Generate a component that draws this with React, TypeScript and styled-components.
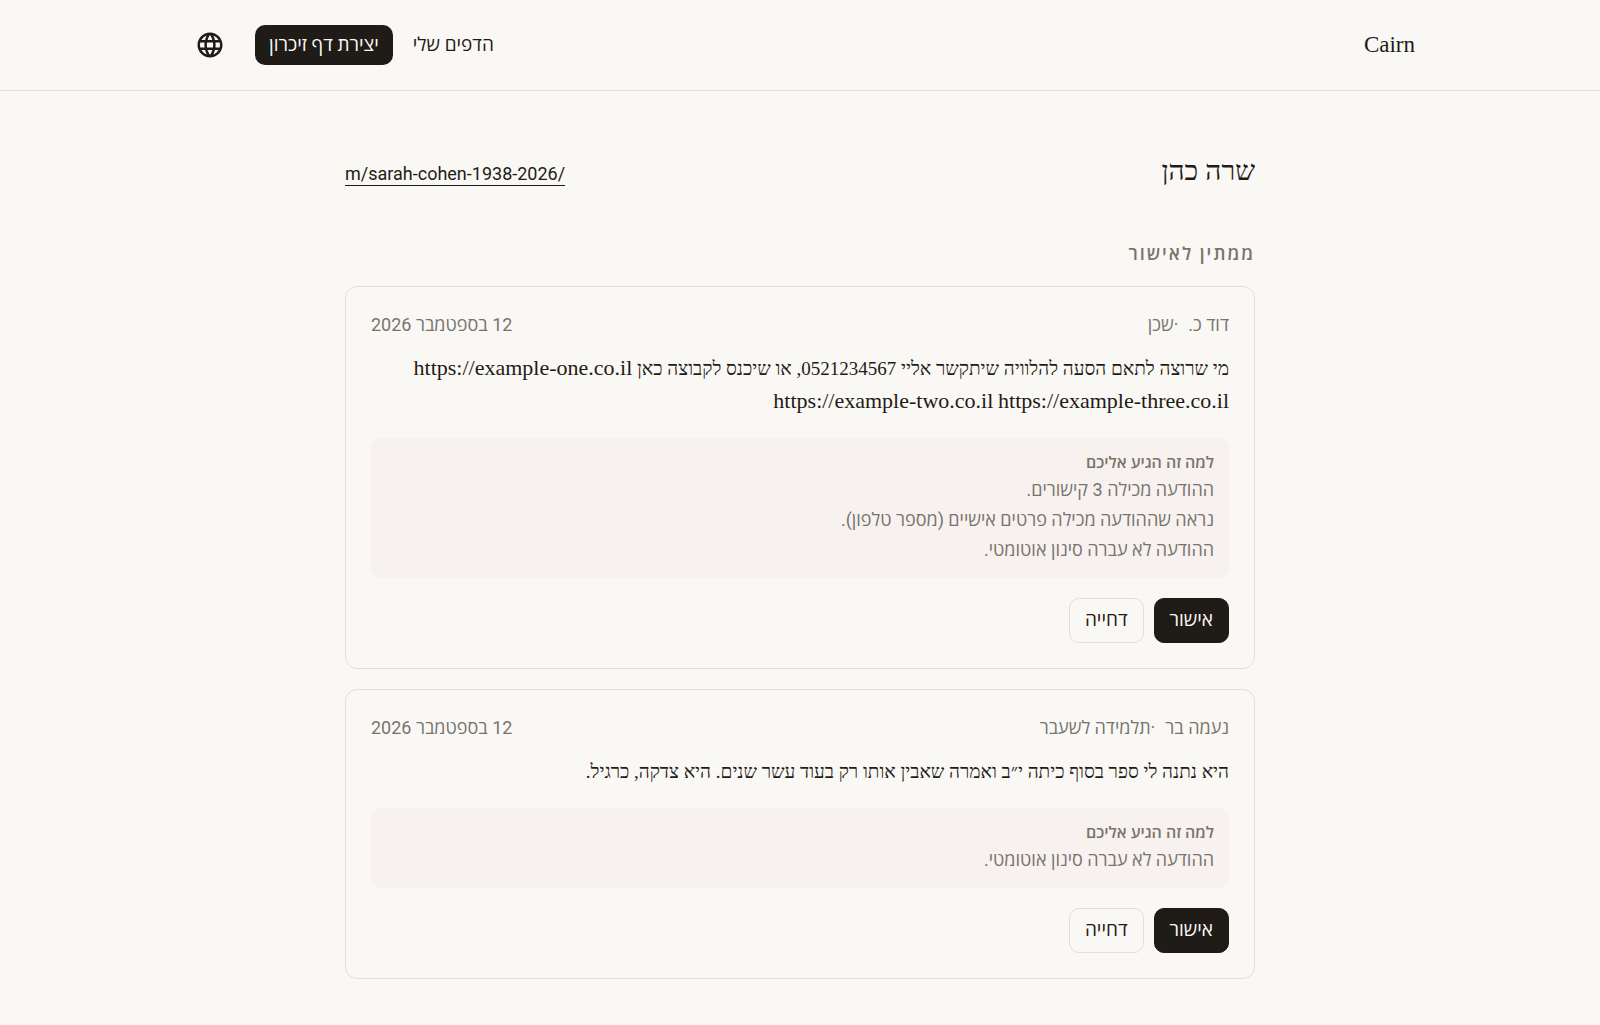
import React from "react";
import styled, { createGlobalStyle } from "styled-components";
import { MdLanguage } from "react-icons/md";

const color = {
  page: "#faf8f4",
  ink: "#1f1b17",
  muted: "#78746d",
  line: "#e1dfd9",
  note: "#f7f2ef",
};

const sans = `Roboto, "Open Sans", "Liberation Sans", sans-serif`;
const serif = `"Liberation Serif", serif`;

const GlobalStyle = createGlobalStyle`
  *, *::before, *::after { box-sizing: border-box; }
  body {
    margin: 0;
    background: ${color.page};
    color: ${color.ink};
    font-family: ${sans};
    font-size: 18px;
  }
  h1, h2, h3, p, ul { margin: 0; padding: 0; }
`;

const Header = styled.header`
  border-bottom: 1px solid ${color.line};
`;

const HeaderInner = styled.div`
  display: flex;
  align-items: center;
  justify-content: space-between;
  max-width: 1230px;
  min-height: 90px;
  margin: 0 auto;
`;

const Brand = styled.a`
  font-family: ${serif};
  font-size: 23px;
  line-height: 30px;
  color: inherit;
  text-decoration: none;
`;

const Nav = styled.nav`
  display: flex;
  align-items: center;
  gap: 20px;
`;

const NavLink = styled.a<{ $filled?: boolean }>`
  display: flex;
  align-items: center;
  height: 40px;
  padding: 0 ${(p) => (p.$filled ? "14px" : "0")} 3px;
  border-radius: 10px;
  background: ${(p) => (p.$filled ? color.ink : "transparent")};
  color: ${(p) => (p.$filled ? color.page : color.ink)};
  font-size: 19px;
  text-decoration: none;
`;

const IconButton = styled.button`
  display: grid;
  place-items: center;
  width: 50px;
  height: 50px;
  padding: 0;
  border: 0;
  background: none;
  color: inherit;
  cursor: pointer;
`;

const Main = styled.main`
  max-width: 910px;
  margin: 0 auto;
  padding: 60px 0 45px;
`;

const TitleRow = styled.div`
  display: flex;
  align-items: baseline;
  justify-content: space-between;
`;

const Title = styled.h1`
  font-family: ${serif};
  font-size: 28px;
  font-weight: 400;
  line-height: 40px;
`;

const PageLink = styled.a`
  border-bottom: 1px solid ${color.ink};
  color: inherit;
  line-height: 22px;
  text-decoration: none;
`;

const SectionTitle = styled.h2`
  margin: 49px 0 18px;
  color: ${color.muted};
  font-size: 18px;
  font-weight: 600;
  line-height: 28px;
  letter-spacing: 2px;
`;

const CardList = styled.div`
  display: grid;
  gap: 20px;
`;

const Card = styled.article`
  padding: 25px;
  border: 1px solid ${color.line};
  border-radius: 12px;
`;

const Meta = styled.div`
  display: flex;
  justify-content: space-between;
  margin-bottom: 15px;
  color: ${color.muted};
  line-height: 25px;
`;

const Author = styled.div`
  display: flex;
  gap: 10px;
`;

const Message = styled.p`
  font-family: ${serif};
  font-size: 19px;
  line-height: 33px;
`;

const Url = styled.span`
  font-size: 22px;
  line-height: 20px;
`;

const Note = styled.section`
  margin: 20px 0;
  padding: 15px 15px 13px;
  border-radius: 10px;
  background: ${color.note};
  color: ${color.muted};
`;

const NoteTitle = styled.h3`
  margin-bottom: 2px;
  font-size: 16px;
  font-weight: 600;
  line-height: 20px;
`;

const Reasons = styled.ul`
  list-style: none;
  line-height: 30px;
`;

const Actions = styled.div`
  display: flex;
  gap: 10px;
`;

const ActionButton = styled.button<{ $primary?: boolean }>`
  height: 45px;
  padding: 0 15px 3px;
  border: 1px solid ${(p) => (p.$primary ? color.ink : color.line)};
  border-radius: 10px;
  background: ${(p) => (p.$primary ? color.ink : "transparent")};
  color: ${(p) => (p.$primary ? color.page : color.ink)};
  font-family: inherit;
  font-size: 19px;
  font-weight: 500;
  cursor: pointer;
`;

type Entry = {
  name: string;
  relation: string;
  date: string;
  text: string;
  reasons: string[];
};

const entries: Entry[] = [
  {
    name: "דוד כ.",
    relation: "שכן",
    date: "12 בספטמבר 2026",
    text: "מי שרוצה לתאם הסעה להלוויה שיתקשר אליי 0521234567, או שיכנס לקבוצה כאן https://example-one.co.il https://example-two.co.il https://example-three.co.il",
    reasons: [
      "ההודעה מכילה 3 קישורים.",
      "נראה שההודעה מכילה פרטים אישיים (מספר טלפון).",
      "ההודעה לא עברה סינון אוטומטי.",
    ],
  },
  {
    name: "נעמה בר",
    relation: "תלמידה לשעבר",
    date: "12 בספטמבר 2026",
    text: "היא נתנה לי ספר בסוף כיתה י״ב ואמרה שאבין אותו רק בעוד עשר שנים. היא צדקה, כרגיל.",
    reasons: ["ההודעה לא עברה סינון אוטומטי."],
  },
];

function EntryCard({ entry }: { entry: Entry }) {
  return (
    <Card>
      <Meta>
        <Author>
          <span>{entry.name}</span>
          <span>·{entry.relation}</span>
        </Author>
        <time>{entry.date}</time>
      </Meta>
      <Message>
        {entry.text
          .split(/(https:\S+)/)
          .map((part, i) => (part.startsWith("https:") ? <Url key={i}>{part}</Url> : part))}
      </Message>
      <Note>
        <NoteTitle>למה זה הגיע אליכם</NoteTitle>
        <Reasons>
          {entry.reasons.map((reason) => (
            <li key={reason}>{reason}</li>
          ))}
        </Reasons>
      </Note>
      <Actions>
        <ActionButton type="button" $primary>
          אישור
        </ActionButton>
        <ActionButton type="button">דחייה</ActionButton>
      </Actions>
    </Card>
  );
}

export default function App() {
  return (
    <div dir="rtl" lang="he">
      <GlobalStyle />
      <Header>
        <HeaderInner>
          <Brand href="#">Cairn</Brand>
          <Nav>
            <NavLink href="#">הדפים שלי</NavLink>
            <NavLink href="#" $filled>
              יצירת דף זיכרון
            </NavLink>
            <IconButton type="button" aria-label="שפה">
              <MdLanguage size={30} />
            </IconButton>
          </Nav>
        </HeaderInner>
      </Header>
      <Main>
        <TitleRow>
          <Title>שרה כהן</Title>
          <PageLink href="#">/m/sarah-cohen-1938-2026</PageLink>
        </TitleRow>
        <SectionTitle>ממתין לאישור</SectionTitle>
        <CardList>
          {entries.map((entry) => (
            <EntryCard key={entry.name} entry={entry} />
          ))}
        </CardList>
      </Main>
    </div>
  );
}
